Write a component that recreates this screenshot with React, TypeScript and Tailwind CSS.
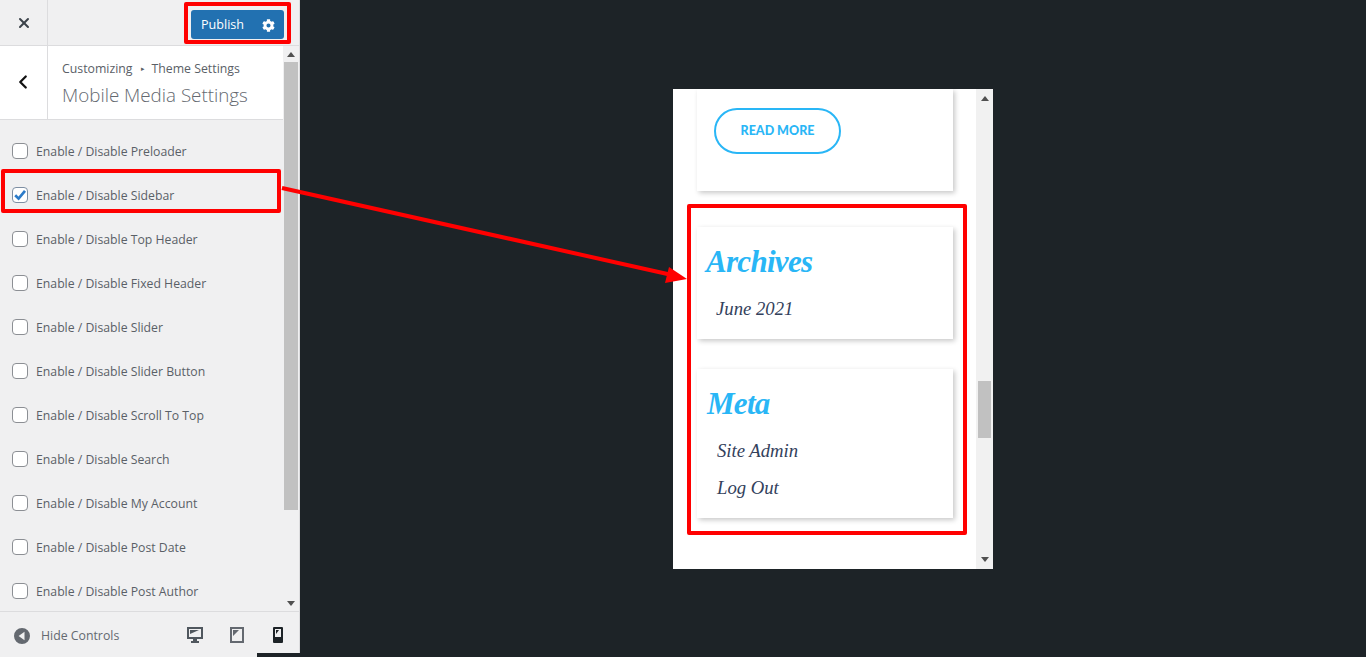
import { ChevronLeft, X } from "lucide-react";
import { FaCog } from "react-icons/fa";

const items = [
  "Enable / Disable Preloader",
  "Enable / Disable Sidebar",
  "Enable / Disable Top Header",
  "Enable / Disable Fixed Header",
  "Enable / Disable Slider",
  "Enable / Disable Slider Button",
  "Enable / Disable Scroll To Top",
  "Enable / Disable Search",
  "Enable / Disable My Account",
  "Enable / Disable Post Date",
  "Enable / Disable Post Author",
];

function Row({ label, checked }: { label: string; checked: boolean }) {
  return (
    <div className="flex items-center h-[16px] mb-[28px] pl-[12px]">
      <span className={`w-[16px] h-[16px] rounded-[4px] border bg-white flex items-center justify-center shrink-0 ${checked ? "border-[#7e8fa3]" : "border-[#8c8f94]"}`}>
        {checked && (
          <svg width="14" height="14" viewBox="0 0 14 14" className="fill-none stroke-[#2b7bc9]">
            <path d="M2.2 7.2 5.6 10.6 12 2.8" strokeWidth="2.7" />
          </svg>
        )}
      </span>
      <span className="ml-[8px] mt-[2px] text-[12.25px] text-[#5a6067] whitespace-nowrap">{label}</span>
    </div>
  );
}

function Tri({ dir }: { dir: "up" | "down" }) {
  return (
    <svg width="8" height="5" viewBox="0 0 8 5" className="fill-[#505050]">
      {dir === "up" ? <path d="M4 0 8 5H0z" /> : <path d="M0 0h8L4 5z" />}
    </svg>
  );
}

function Card({ title, links, pad }: { title: string; links: string[]; pad: string }) {
  return (
    <div className={`w-[256px] bg-white shadow-[2px_2px_5px_rgba(0,0,0,0.22)] ${pad}`}>
      <div className="font-['Liberation_Serif'] italic font-bold text-[31px] tracking-[-0.7px] leading-[40px] text-[#29b6f6]">{title}</div>
      <div className="mt-[8px] pl-[10px]">
        {links.map((l) => (
          <div key={l} className="font-['Liberation_Serif'] italic text-[18.7px] leading-[37px] text-[#33415c]">{l}</div>
        ))}
      </div>
    </div>
  );
}

export default function App() {
  return (
    <div className="relative flex w-[1366px] h-[657px] overflow-hidden bg-[#1d2327] font-['Open_Sans',sans-serif]">
      <aside className="w-[300px] h-full bg-[#f0f0f1] flex flex-col shrink-0 border-r border-[#dcdcde]">
        <header className="h-[46px] flex items-center border-b border-[#dcdcde] shrink-0">
          <div className="w-[48px] h-full border-r border-[#dcdcde] flex items-center justify-center">
            <X size={16} strokeWidth={3} className="text-[#3c434a]" />
          </div>
          <div className="ml-auto mr-[15px] mt-[4px] w-[93px] h-[29px] pt-[1px] rounded-[3px] bg-[#2271b1] flex items-center text-white">
            <span className="pl-[10px] text-[12.6px]">Publish</span>
            <FaCog size={13} className="ml-auto mr-[9px]" />
          </div>
        </header>
        <div className="flex-1 min-h-0 flex">
          <div className="flex-1 min-w-0 overflow-hidden">
            <div className="h-[74px] bg-white border-b border-[#dcdcde] flex">
              <div className="w-[48px] pr-[2px] pb-[2px] border-r border-[#dcdcde] flex items-center justify-center">
                <ChevronLeft size={22} strokeWidth={2.5} className="text-[#111111]" />
              </div>
              <div className="pl-[14px] pt-[14px]">
                <div className="flex items-center text-[12.3px] leading-[17px] text-[#5a6067]">
                  Customizing
                  <span className="ml-[8px] mr-[7px] text-[7px]">▸</span>
                  Theme Settings
                </div>
                <div className="mt-[6px] text-[18.8px] leading-[24px] font-light text-[#646970]">Mobile Media Settings</div>
              </div>
            </div>
            <div className="pt-[23px]">
              {items.map((t, i) => (
                <Row key={t} label={t} checked={i === 1} />
              ))}
            </div>
          </div>
          <div className="w-[16px] flex flex-col items-center pt-[6px] pb-[5px]">
            <Tri dir="up" />
            <div className="w-[14px] h-[448px] mt-[5px] bg-[#c1c1c1]" />
            <div className="mt-auto"><Tri dir="down" /></div>
          </div>
        </div>
        <footer className="relative h-[46px] border-t border-[#dcdcde] flex items-center shrink-0">
          <svg width="16" height="16" viewBox="0 0 16 16" className="ml-[14px] mt-[2px] fill-[#646970]">
            <path fillRule="evenodd" d="M8 0a8 8 0 1 1 0 16A8 8 0 0 1 8 0Zm2.5 3.8L4.6 8l5.9 4.2Z" />
          </svg>
          <span className="ml-[11px] mt-[3px] text-[12.3px] text-[#646970]">Hide Controls</span>
          <svg width="16" height="16" viewBox="0 0 16 16" className="absolute left-[187px] top-[15px] fill-[#50575e]">
            <path fillRule="evenodd" d="M0 0h16v12H10v2h2v2H4v-2h2v-2H0Zm2 2v8h12V2Zm1 1h9L3 7Z" />
          </svg>
          <svg width="14" height="16" viewBox="0 0 14 16" className="absolute left-[230px] top-[15px] fill-[#646970]">
            <path fillRule="evenodd" d="M0 0h14v16H0Zm2 2v12h10V2Zm1 1h6L3 9Z" />
          </svg>
          <svg width="10" height="16" viewBox="0 0 10 16" className="absolute left-[273px] top-[15px] fill-[#1d2327]">
            <path fillRule="evenodd" d="M1 0h8a1 1 0 0 1 1 1v14a1 1 0 0 1-1 1H1a1 1 0 0 1-1-1V1a1 1 0 0 1 1-1Zm1 2v8h6V2Zm1 1h3L3 7Z" />
          </svg>
          <div className="absolute left-[257px] bottom-0 w-[43px] h-[4px] bg-[#1d2327]" />
        </footer>
      </aside>

      <main className="flex-1 flex items-center justify-center">
        <div className="w-[320px] h-[480px] bg-white flex overflow-hidden">
          <div className="flex-1 min-w-0 pl-[24px]">
            <div className="w-[256px] h-[102px] bg-white shadow-[2px_2px_5px_rgba(0,0,0,0.22)] pl-[17px] pt-[19px]">
              <div className="w-[127px] h-[46px] pt-[2px] rounded-full border-2 border-[#29b6f6] flex items-center justify-center font-['Lato'] text-[12.5px] font-black text-[#29b6f6]">READ MORE</div>
            </div>
            <div className="mt-[36px]">
              <Card title="Archives" links={["June 2021"]} pad="h-[112px] pl-[9px] pt-[15px]" />
            </div>
            <div className="mt-[30px]">
              <Card title="Meta" links={["Site Admin", "Log Out"]} pad="h-[149px] pl-[10px] pt-[15px]" />
            </div>
          </div>
          <div className="w-[17px] bg-[#f1f1f1] flex flex-col items-center pt-[7px] pb-[7px]">
            <Tri dir="up" />
            <div className="w-[13px] h-[57px] mt-[280px] bg-[#c1c1c1]" />
            <div className="mt-auto"><Tri dir="down" /></div>
          </div>
        </div>
      </main>

      <div className="absolute left-[184px] top-[2px] w-[107px] h-[42px] border-4 border-[#ff0000] rounded-[2px]" />
      <div className="absolute left-[1px] top-[169px] w-[280px] h-[44px] border-4 border-[#ff0000] rounded-[2px]" />
      <div className="absolute left-[687px] top-[204px] w-[280px] h-[331px] border-4 border-[#ff0000] rounded-[2px]" />
      <svg className="absolute left-0 top-0 pointer-events-none" width="1366" height="657">
        <line x1="282" y1="188" x2="672" y2="275" stroke="#ff0000" strokeWidth="4" />
        <polygon points="687,279 665,283 669,267" fill="#ff0000" />
      </svg>
    </div>
  );
}
